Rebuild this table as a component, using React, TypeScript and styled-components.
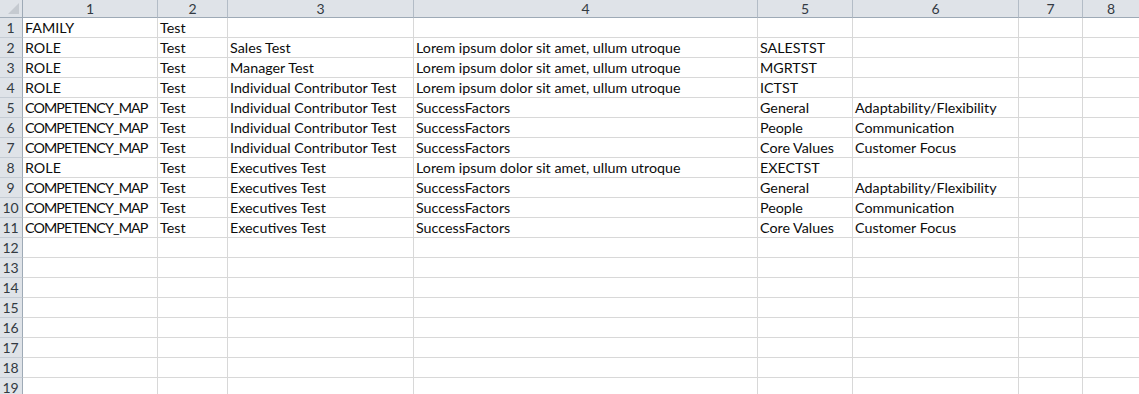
import React from "react";
import styled, { createGlobalStyle } from "styled-components";

const GlobalStyle = createGlobalStyle`
    html, body {
        margin: 0;
        padding: 0;
        background: #ffffff;
        overflow: hidden;
    }
`;

// row header + columns 1..8 (last one runs off to the right edge)
const COLS = [23, 135, 70, 186, 344, 95, 166, 64, 57];

const Sheet = styled.div`
    display: grid;
    grid-template-columns: ${COLS.map((w) => `${w}px`).join(" ")};
    grid-template-rows: 18px;
    grid-auto-rows: 20px;
    width: 1139px;
    font-family: "Lato", "Liberation Sans", sans-serif;
    font-size: 14.3px;
    color: #000;
`;

const Corner = styled.div`
    position: relative;
    background: #dfe3e8;
    border-right: 1px solid #9eaab6;
    border-bottom: 1px solid #9eaab6;
    box-sizing: border-box;

    &:after {
        content: "";
        position: absolute;
        right: 3px;
        bottom: 3px;
        width: 0;
        height: 0;
        border-left: 11px solid transparent;
        border-bottom: 11px solid #c5cad0;
    }
`;

const ColHead = styled.div`
    background: #dfe3e8;
    border-right: 1px solid #b3bcc6;
    border-bottom: 1px solid #9eaab6;
    box-sizing: border-box;
    color: #333a42;
    text-align: center;
    line-height: 17px;
    font-size: 14px;
`;

const RowHead = styled.div`
    background: #dfe3e8;
    border-right: 1px solid #9eaab6;
    border-bottom: 1px solid #c5ccd4;
    box-sizing: border-box;
    color: #333a42;
    text-align: center;
    line-height: 20px;
    font-size: 14px;
    padding-right: 1px;
`;

const Cell = styled.div<{ $condensed?: boolean }>`
    border-right: 1px solid #d8d8d8;
    border-bottom: 1px solid #d8d8d8;
    box-sizing: border-box;
    padding: 0 0 0 2px;
    line-height: 20px;
    white-space: nowrap;
    overflow: visible;
    color: #0c0c0c;
    letter-spacing: ${(p) => (p.$condensed ? "-0.9px" : "0")};
`;

const lorem = "Lorem ipsum dolor sit amet, ullum utroque";

const data: string[][] = [
    ["FAMILY", "Test", "", "", "", ""],
    ["ROLE", "Test", "Sales Test", lorem, "SALESTST", ""],
    ["ROLE", "Test", "Manager Test", lorem, "MGRTST", ""],
    ["ROLE", "Test", "Individual Contributor Test", lorem, "ICTST", ""],
    ["COMPETENCY_MAP", "Test", "Individual Contributor Test", "SuccessFactors", "General", "Adaptability/Flexibility"],
    ["COMPETENCY_MAP", "Test", "Individual Contributor Test", "SuccessFactors", "People", "Communication"],
    ["COMPETENCY_MAP", "Test", "Individual Contributor Test", "SuccessFactors", "Core Values", "Customer Focus"],
    ["ROLE", "Test", "Executives Test", lorem, "EXECTST", ""],
    ["COMPETENCY_MAP", "Test", "Executives Test", "SuccessFactors", "General", "Adaptability/Flexibility"],
    ["COMPETENCY_MAP", "Test", "Executives Test", "SuccessFactors", "People", "Communication"],
    ["COMPETENCY_MAP", "Test", "Executives Test", "SuccessFactors", "Core Values", "Customer Focus"],
];

const ROW_COUNT = 19;
const COL_LABELS = ["1", "2", "3", "4", "5", "6", "7", "8"];

const App = () => {
    return (
        <>
            <GlobalStyle />
            <Sheet>
                <Corner />
                {COL_LABELS.map((c) => (
                    <ColHead key={"h" + c}>{c}</ColHead>
                ))}
                {Array.from({ length: ROW_COUNT }).map((_, r) => (
                    <React.Fragment key={r}>
                        <RowHead>{r + 1}</RowHead>
                        {COL_LABELS.map((_, c) => {
                            const v = (data[r] && data[r][c]) || "";
                            return (
                                <Cell key={c} $condensed={v.includes("_")}>
                                    {v}
                                </Cell>
                            );
                        })}
                    </React.Fragment>
                ))}
            </Sheet>
        </>
    );
};

export default App;
